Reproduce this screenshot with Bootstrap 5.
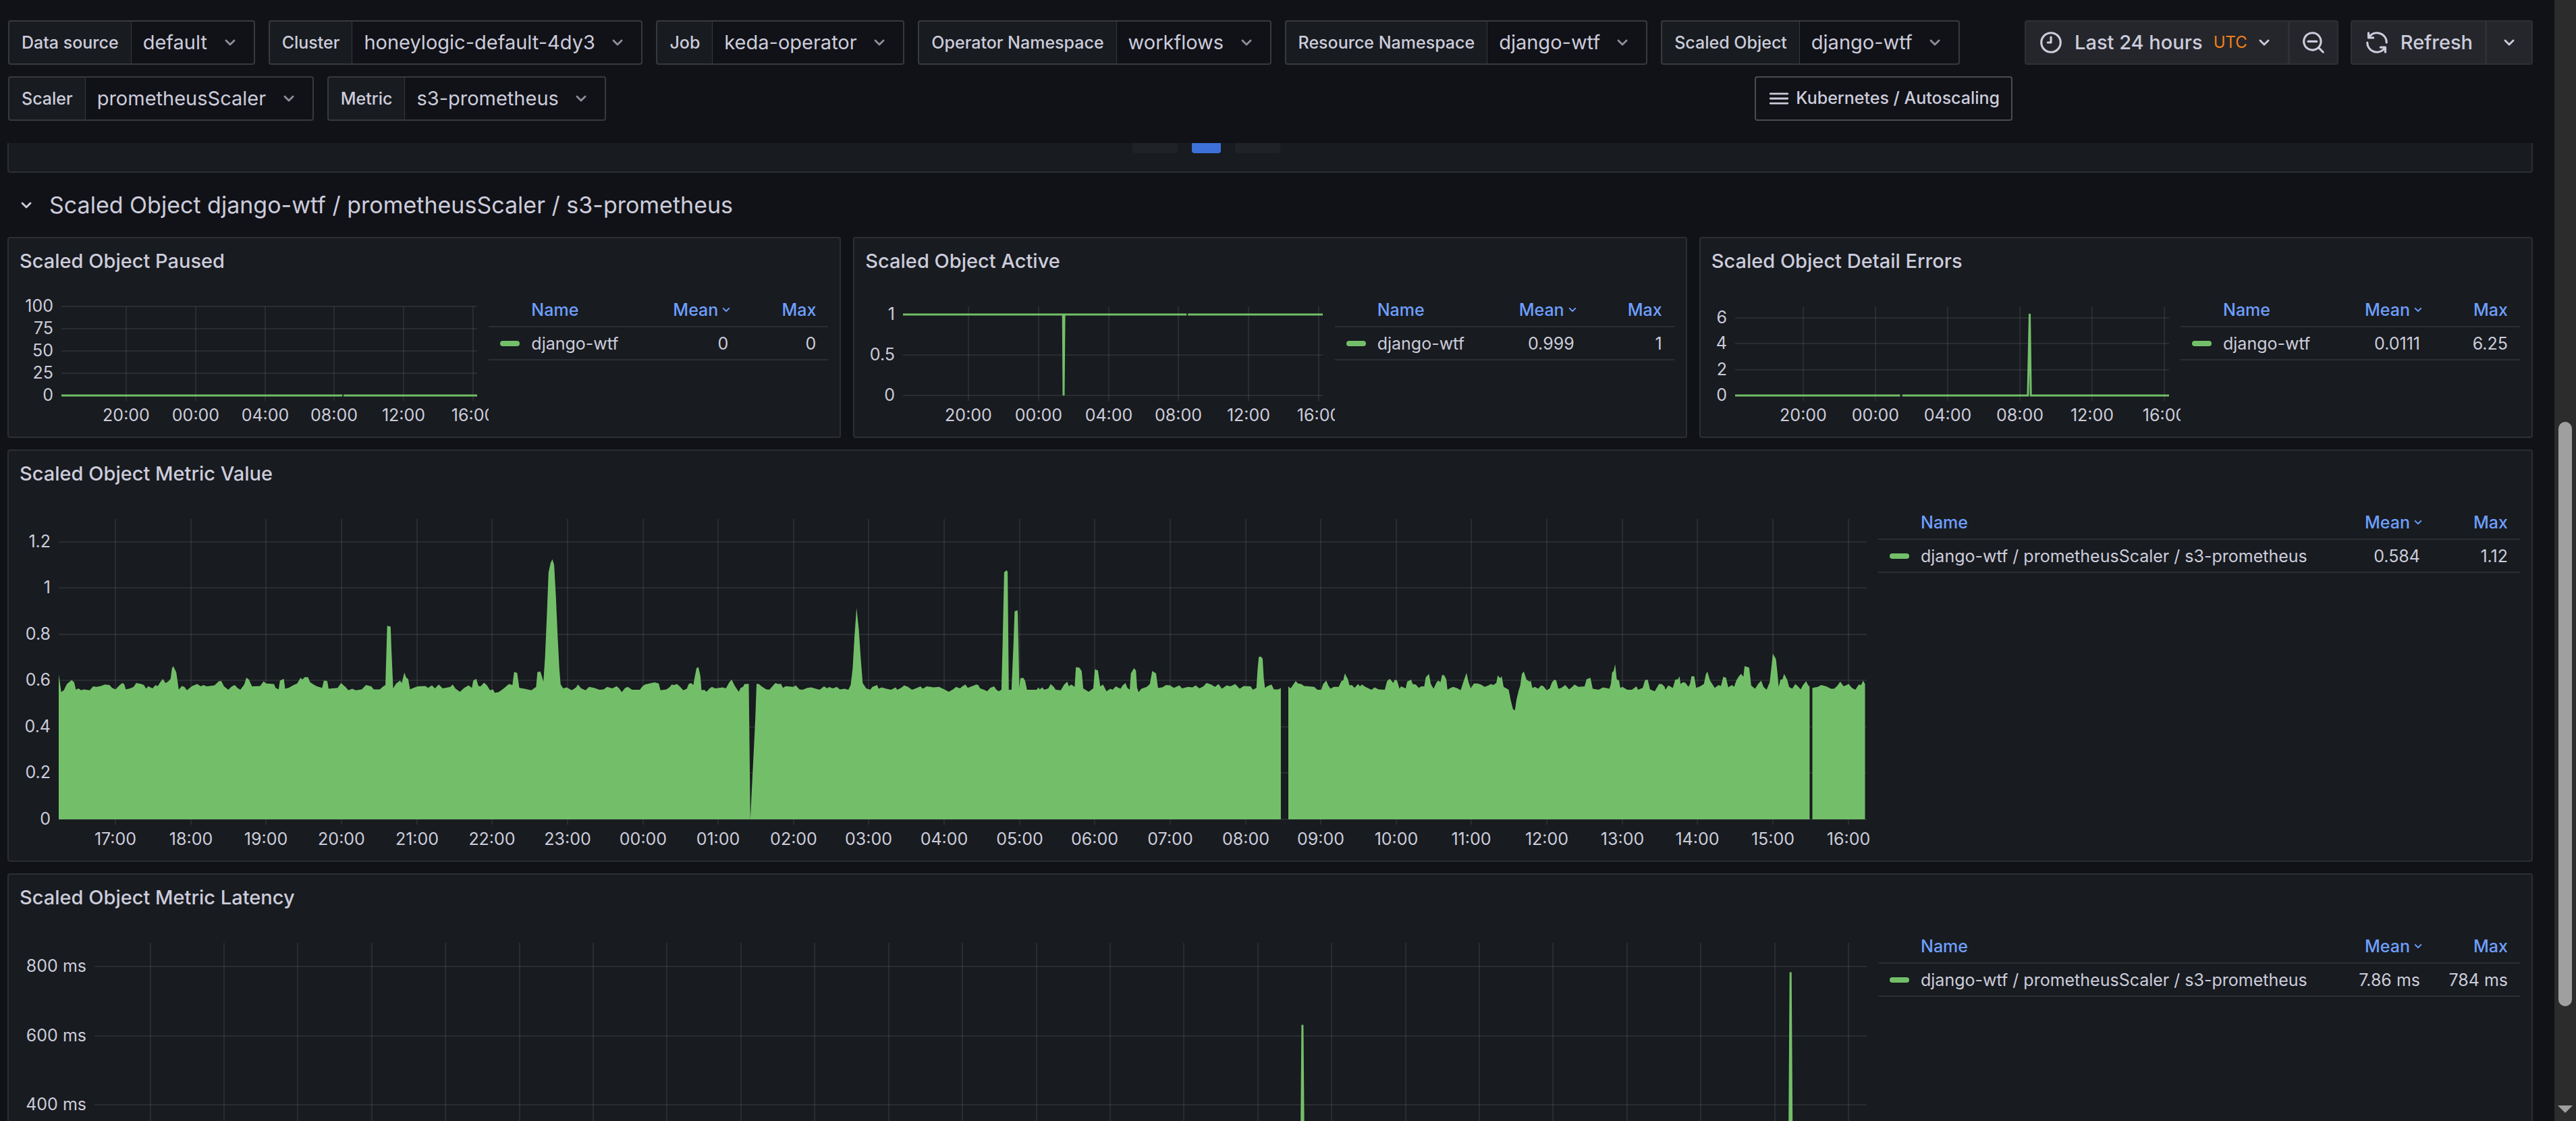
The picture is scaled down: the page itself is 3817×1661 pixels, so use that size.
<!DOCTYPE html>
<html lang="en" data-bs-theme="dark">
<head>
<meta charset="utf-8">
<meta name="viewport" content="width=device-width, initial-scale=1">
<title>Kubernetes / Autoscaling / KEDA</title>
<link rel="stylesheet" href="https://cdn.jsdelivr.net/npm/bootstrap@5.3.0/dist/css/bootstrap.min.css">
<style>
:root{--canvas:#111217;--panel:#181b1f;--line:#2d2e34;--field-line:#38393f;--ink:#ccccdc;--link:#6e9fff;--green:#73bf69;}
body{background:var(--canvas);color:var(--ink);font-family:Inter,"Liberation Sans",sans-serif;font-size:25px;line-height:32px;}
svg.ic{fill:currentColor;flex:none;display:block;}
.ic-lg{width:38px;height:38px}
.ic-md{width:34px;height:34px}
.ic-sm{width:24px;height:24px}

/* top controls */
.dash-top{padding:30px 0 33px 1px;column-gap:18px;}
.dash-vars{gap:17px 20px;}
.var-box{width:auto;height:66px;}
.var-box .input-group-text{background:var(--panel);border:2px solid var(--field-line);border-right-width:1px;border-radius:4px;color:var(--ink);font-size:25px;font-weight:500;line-height:32px;padding:0 18px;}
.var-box .form-select{flex:0 0 auto;width:auto;background-color:var(--canvas);border:2px solid var(--field-line);border-left-width:1px;border-radius:4px;color:var(--ink);font-size:29px;line-height:38px;padding:0 68px 0 17px;
 background-image:url("data:image/svg+xml,%3Csvg xmlns='http://www.w3.org/2000/svg' viewBox='0 0 24 24' fill='%238e8e9a'%3E%3Cpath d='M17,9.17a1,1,0,0,0-1.41,0L12,12.71,8.46,9.17a1,1,0,0,0-1.41,0,1,1,0,0,0,0,1.42l4.24,4.24a1,1,0,0,0,1.42,0L17,10.59A1,1,0,0,0,17,9.17Z'/%3E%3C/svg%3E");
 background-size:34px 34px;background-position:right 18px center;}
.dash-link{height:66px;border:2px solid #4a4b51;border-radius:4px;color:var(--ink);font-size:25px;font-weight:500;padding:0 17px;gap:8px;}
.tool-btn{height:66px;background:#24262b;border:2px solid #2f3036;border-radius:4px;color:var(--ink);font-size:29px;font-weight:500;line-height:38px;padding:0 18px;}
.tool-btn .tz{color:#f08019;font-size:24px;font-weight:400;}
.tool-btn.tool-slim{padding:0 16px;}

/* dashboard body */
.dash-main{padding:0 32px 0 11px;}
.clip-view{height:44px;overflow:hidden;}
.panel-box{background:var(--panel);border:2px solid var(--line);border-radius:4px;}
.prev-panel{height:120px;gap:21px;padding:0 190px 27px 0;}
.page-btn{border:0;height:49px;width:67px;background:#1f2226;border-radius:4px;padding:0;}
.page-btn.current{width:43px;background:#3d71d9;}
.row-head{height:95px;padding-left:11px;font-size:34px;line-height:44px;color:var(--ink);font-weight:400;}
.row-head button{background:none;border:0;color:inherit;padding:0;gap:17px;}
.panels{gap:17px;}
.panel-row{gap:18px;}
.panel-row .panel-box{flex:1 1 0;}
.panel-sm{height:298px;}
.panel-lg{height:611px;}
.panel-title{font-size:29px;font-weight:500;line-height:38px;padding:15px 16px 13px;margin:0;color:var(--ink);}
.panel-body{padding:0 17px 16px 16px;min-height:0;}
.chart{min-width:0;overflow:hidden;}
.chart svg{display:block;width:100%;height:100%;}
.chart text{fill:var(--ink);font-size:25px;}
.chart .grid{stroke:rgba(240,250,255,.08);stroke-width:2;shape-rendering:crispEdges;}
.chart .wave{fill:none;stroke:var(--green);stroke-width:3;}
.chart .wave-fill{fill:var(--green);}
.legend{padding-top:16px;}
.legend-sm{flex:0 0 503px;}
.legend-lg{flex:0 0 951px;}
.legend table{width:100%;border-collapse:collapse;font-size:25px;line-height:32px;}
.legend th{color:var(--link);font-weight:500;}
.legend th,.legend td{height:49px;padding:0 18px 0 0;border-bottom:2px solid var(--line);text-align:right;white-space:nowrap;}
.legend th:first-child,.legend td:first-child{text-align:left;padding-left:17px;}
.legend th:first-child{padding-left:63px;}
.legend th:last-child,.legend td:last-child{width:130px;}
.legend .sorted{padding-right:9px;}
.swatch{width:29px;height:8px;border-radius:4px;background:var(--green);margin-right:17px;}

/* scroll rail */
.rail{flex:0 0 32px;background:#2c2c2c;}
.rail-gap{flex:625 0 0}
.rail-thumb{flex:866 0 0;width:20px;border-radius:10px;background:#9f9f9f;}
.rail-tail{flex:147 0 0}
.rail-arrow{width:22px;height:23px;}
</style>
<script src="https://cdn.jsdelivr.net/npm/bootstrap@5.3.0/dist/js/bootstrap.bundle.min.js"></script>
</head>
<body class="d-flex vh-100 overflow-hidden">
<svg class="d-none" aria-hidden="true">
  <symbol id="i-down" viewBox="0 0 24 24"><path d="M17,9.17a1,1,0,0,0-1.41,0L12,12.71,8.46,9.17a1,1,0,0,0-1.41,0,1,1,0,0,0,0,1.42l4.24,4.24a1,1,0,0,0,1.42,0L17,10.59A1,1,0,0,0,17,9.17Z"/></symbol>
  <symbol id="i-clock" viewBox="0 0 24 24"><path d="M12,2A10,10,0,1,0,22,12,10,10,0,0,0,12,2Zm0,18a8,8,0,1,1,8-8A8,8,0,0,1,12,20ZM12,6a1,1,0,0,0-1,1v4H9a1,1,0,0,0,0,2h3a1,1,0,0,0,1-1V7A1,1,0,0,0,12,6Z"/></symbol>
  <symbol id="i-zoomout" viewBox="0 0 24 24"><path d="M21.71,20.29,18,16.61A9,9,0,1,0,16.61,18l3.68,3.68a1,1,0,0,0,1.42,0A1,1,0,0,0,21.71,20.29ZM11,18a7,7,0,1,1,7-7A7,7,0,0,1,11,18Zm4-8H7a1,1,0,0,0,0,2h8a1,1,0,0,0,0-2Z"/></symbol>
  <symbol id="i-sync" viewBox="0 0 24 24"><path d="M19.91,15.51H15.38a1,1,0,0,0,0,2h2.4A8,8,0,0,1,4,12a1,1,0,1,0-2,0,10,10,0,0,0,16.88,7.23V21a1,1,0,0,0,2,0V16.5A1,1,0,0,0,19.91,15.51ZM12,2A10,10,0,0,0,5.12,4.77V3a1,1,0,0,0-2,0V7.5a1,1,0,0,0,1,1h4.5a1,1,0,0,0,0-2H6.22A8,8,0,0,1,20,12a1,1,0,0,0,2,0A10,10,0,0,0,12,2Z"/></symbol>
  <symbol id="i-bars" viewBox="0 0 24 24"><path d="M3,8H21a1,1,0,0,0,0-2H3A1,1,0,0,0,3,8Zm18,8H3a1,1,0,0,0,0,2H21a1,1,0,0,0,0-2Zm0-5H3a1,1,0,0,0,0,2H21a1,1,0,0,0,0-2Z"/></symbol>
</svg>

<main class="dash-main flex-grow-1 overflow-hidden">
  <header class="dash-top d-flex align-items-start">
    <div class="dash-vars d-flex flex-wrap flex-grow-1">
      <div class="input-group flex-nowrap var-box"><label class="input-group-text" for="v-ds">Data source</label><select class="form-select" id="v-ds"><option>default</option></select></div>
      <div class="input-group flex-nowrap var-box"><label class="input-group-text" for="v-cl">Cluster</label><select class="form-select" id="v-cl"><option>honeylogic-default-4dy3</option></select></div>
      <div class="input-group flex-nowrap var-box"><label class="input-group-text" for="v-job">Job</label><select class="form-select" id="v-job"><option>keda-operator</option></select></div>
      <div class="input-group flex-nowrap var-box"><label class="input-group-text" for="v-on">Operator Namespace</label><select class="form-select" id="v-on"><option>workflows</option></select></div>
      <div class="input-group flex-nowrap var-box"><label class="input-group-text" for="v-rn">Resource Namespace</label><select class="form-select" id="v-rn"><option>django-wtf</option></select></div>
      <div class="input-group flex-nowrap var-box"><label class="input-group-text" for="v-so">Scaled Object</label><select class="form-select" id="v-so"><option>django-wtf</option></select></div>
      <div class="input-group flex-nowrap var-box"><label class="input-group-text" for="v-sc">Scaler</label><select class="form-select" id="v-sc"><option>prometheusScaler</option></select></div>
      <div class="input-group flex-nowrap var-box"><label class="input-group-text" for="v-me">Metric</label><select class="form-select" id="v-me"><option>s3-prometheus</option></select></div>
      <button type="button" class="btn dash-link d-flex align-items-center ms-auto"><svg class="ic ic-md"><use href="#i-bars"/></svg>Kubernetes / Autoscaling</button>
    </div>
    <div class="btn-group flex-shrink-0">
      <button type="button" class="btn tool-btn d-flex align-items-center"><svg class="ic ic-lg me-3"><use href="#i-clock"/></svg>Last 24 hours<span class="tz ms-3 me-2">UTC</span><svg class="ic ic-md"><use href="#i-down"/></svg></button>
      <button type="button" class="btn tool-btn tool-slim d-flex align-items-center" aria-label="Zoom out time range"><svg class="ic ic-lg"><use href="#i-zoomout"/></svg></button>
    </div>
    <div class="btn-group flex-shrink-0">
      <button type="button" class="btn tool-btn d-flex align-items-center"><svg class="ic ic-lg me-3"><use href="#i-sync"/></svg>Refresh</button>
      <button type="button" class="btn tool-btn tool-slim d-flex align-items-center" aria-label="Auto refresh interval"><svg class="ic ic-md"><use href="#i-down"/></svg></button>
    </div>
  </header>

  <div class="clip-view d-flex align-items-end">
    <nav class="panel-box prev-panel w-100 d-flex justify-content-center align-items-end" aria-label="Table pages">
      <button type="button" class="page-btn" aria-label="Previous page"></button>
      <button type="button" class="page-btn current" aria-label="Current page"></button>
      <button type="button" class="page-btn" aria-label="Next page"></button>
    </nav>
  </div>

  <h2 class="row-head d-flex align-items-center m-0"><button type="button" class="d-flex align-items-center"><svg class="ic ic-md"><use href="#i-down"/></svg>Scaled Object django-wtf / prometheusScaler / s3-prometheus</button></h2>

  <div class="panels d-flex flex-column">
    <div class="panel-row d-flex">
      <section class="panel-box panel-sm d-flex flex-column">
        <h3 class="panel-title">Scaled Object Paused</h3>
        <div class="panel-body d-flex flex-grow-1">
          <div class="chart flex-grow-1" data-chart="paused"></div>
          <div class="legend legend-sm"><table>
            <thead><tr><th>Name</th><th class="sorted"><span class="d-inline-flex align-items-center">Mean<svg class="ic ic-sm"><use href="#i-down"/></svg></span></th><th>Max</th></tr></thead>
            <tbody><tr><td><span class="d-flex align-items-center"><span class="swatch"></span>django-wtf</span></td><td>0</td><td>0</td></tr></tbody></table></div>
        </div>
      </section>
      <section class="panel-box panel-sm d-flex flex-column">
        <h3 class="panel-title">Scaled Object Active</h3>
        <div class="panel-body d-flex flex-grow-1">
          <div class="chart flex-grow-1" data-chart="active"></div>
          <div class="legend legend-sm"><table>
            <thead><tr><th>Name</th><th class="sorted"><span class="d-inline-flex align-items-center">Mean<svg class="ic ic-sm"><use href="#i-down"/></svg></span></th><th>Max</th></tr></thead>
            <tbody><tr><td><span class="d-flex align-items-center"><span class="swatch"></span>django-wtf</span></td><td>0.999</td><td>1</td></tr></tbody></table></div>
        </div>
      </section>
      <section class="panel-box panel-sm d-flex flex-column">
        <h3 class="panel-title">Scaled Object Detail Errors</h3>
        <div class="panel-body d-flex flex-grow-1">
          <div class="chart flex-grow-1" data-chart="errors"></div>
          <div class="legend legend-sm"><table>
            <thead><tr><th>Name</th><th class="sorted"><span class="d-inline-flex align-items-center">Mean<svg class="ic ic-sm"><use href="#i-down"/></svg></span></th><th>Max</th></tr></thead>
            <tbody><tr><td><span class="d-flex align-items-center"><span class="swatch"></span>django-wtf</span></td><td>0.0111</td><td>6.25</td></tr></tbody></table></div>
        </div>
      </section>
    </div>

    <section class="panel-box panel-lg d-flex flex-column">
      <h3 class="panel-title">Scaled Object Metric Value</h3>
      <div class="panel-body d-flex flex-grow-1">
        <div class="chart flex-grow-1" data-chart="value"></div>
        <div class="legend legend-lg"><table>
          <thead><tr><th>Name</th><th class="sorted"><span class="d-inline-flex align-items-center">Mean<svg class="ic ic-sm"><use href="#i-down"/></svg></span></th><th>Max</th></tr></thead>
          <tbody><tr><td><span class="d-flex align-items-center"><span class="swatch"></span>django-wtf / prometheusScaler / s3-prometheus</span></td><td>0.584</td><td>1.12</td></tr></tbody></table></div>
      </div>
    </section>

    <section class="panel-box panel-lg d-flex flex-column">
      <h3 class="panel-title">Scaled Object Metric Latency</h3>
      <div class="panel-body d-flex flex-grow-1">
        <div class="chart flex-grow-1" data-chart="latency"></div>
        <div class="legend legend-lg"><table>
          <thead><tr><th>Name</th><th class="sorted"><span class="d-inline-flex align-items-center">Mean<svg class="ic ic-sm"><use href="#i-down"/></svg></span></th><th>Max</th></tr></thead>
          <tbody><tr><td><span class="d-flex align-items-center"><span class="swatch"></span>django-wtf / prometheusScaler / s3-prometheus</span></td><td>7.86 ms</td><td>784 ms</td></tr></tbody></table></div>
      </div>
    </section>
  </div>
</main>

<aside class="rail d-flex flex-column align-items-center" aria-hidden="true">
  <div class="rail-gap"></div><div class="rail-thumb"></div><div class="rail-tail"></div>
  <svg class="rail-arrow" viewBox="0 0 22 23"><path d="M0 0h22L11 11z" fill="#9f9f9f"/></svg>
</aside>

<script>
// Hours are counted from midnight of the first day; the window is 24 h long.
const START = 16.246, SPAN = 24;

// Compact samples: [x, y, x, y, ...]; x ticks per hour and y ticks per unit are given by each block.
const unpack = (hour0, x0, perHour, flat) => {
  const out = [];
  for (let i = 0; i < flat.length; i += 2) out.push([hour0 + (flat[i] - x0) / perHour, (1326 - flat[i + 1]) / 961]);
  return out;
};
const evening = unpack(17, 270, 175, [138,725,144,798,150,790,157,764,168,748,174,756,178,788,184,782,190,790,196,786,210,790,218,774,226,776,236,772,245,766,256,768,262,780,270,786,280,768,286,760,290,764,294,786,304,782,312,776,318,760,330,764,336,768,341,784,346,773,356,782,363,768,368,773,374,756,380,743,386,760,392,754,398,742,401,700,404,690,411,714,414,750,417,788,424,772,430,776,436,790,448,772,460,764,468,774,474,768,482,774,500,770,510,752,516,752,522,774,532,788,540,774,547,768,553,780,560,788,569,766,574,737,580,746,587,774,606,772,614,753,620,762,638,764,642,780,649,786,652,750,661,742,664,784,672,780,684,768,692,762,700,738,704,746,709,736,717,735,722,756,730,766,738,774,750,780,754,749,762,752,765,784,786,780,794,760,804,776,811,790,820,784,828,790,842,786,852,768,864,774,870,786,884,786,892,774,897,768,901,522,909,526,911,620,915,782,922,762,931,750,935,760,941,716,945,736,950,744,954,786,962,780,972,774,990,772,996,780,1005,770,1012,782,1021,766,1030,782,1048,776,1053,766,1060,784,1070,796,1080,780,1090,770,1098,780,1101,750,1108,742,1113,772,1118,774,1126,758,1133,770,1140,790,1147,786,1151,800,1160,798,1172,782,1184,764,1192,768,1196,714,1203,718,1208,780,1220,784,1236,790,1247,776,1250,714,1257,712,1264,754,1268,650,1272,480,1276,300,1281,260,1285,246,1289,270,1293,400,1297,560,1301,700,1304,765,1310,782,1318,778,1330,790,1340,778,1344,766,1352,782,1362,790,1370,776,1382,780,1394,788,1404,786,1412,776,1424,782,1434,773,1440,782,1446,798,1454,780,1460,776,1470,788,1488,788,1494,774,1500,766,1510,762,1522,757,1532,762,1536,790,1550,786,1558,776,1562,766]);
const night = unpack(25, 114, 194.4, [0,768,8,764,16,776,24,790,33,784,38,764,44,760,50,768,53,740,58,698,63,694,68,730,71,790,78,788,84,796,92,782,98,776,106,782,116,780,126,778,134,782,143,756,149,746,156,770,167,796,172,780,178,776,182,764,193,763,194,900,197,1326,207,1000,210,900,213,763,219,764,226,774,238,786,246,788,256,770,262,760,268,764,276,763,281,780,288,773,308,776,314,770,324,786,332,788,344,780,354,778,366,784,376,788,387,774,396,782,400,776,410,782,420,776,428,786,440,784,450,788,456,768,461,700,466,560,471,448,477,540,482,660,487,760,496,782,506,788,512,776,524,768,528,784,536,778,548,784,560,788,572,778,576,788,586,780,594,770,604,776,614,788,624,782,636,774,642,784,652,774,662,776,670,778,684,776,692,782,702,790,709,796,720,786,728,776,738,782,744,774,752,766,758,780,768,774,780,766,785,768,790,782,800,788,808,794,816,780,826,774,832,788,838,794,845,788,848,600,852,300,858,292,861,298,864,788,871,788,876,600,879,462,887,458,889,600,891,780,894,740,901,738,906,750,911,788,922,788,936,788,940,778,944,786,950,778,956,788,966,782,972,764,980,776,985,788,998,790,1007,766,1015,754,1019,774,1025,766,1034,776,1037,694,1046,696,1052,710,1056,782,1070,796,1082,782,1086,702,1094,708,1100,774,1107,766,1116,794,1126,784,1132,788,1140,774,1152,784,1158,770,1165,760,1170,780,1176,788,1179,720,1187,698,1192,708,1195,780,1199,798,1206,784,1220,776,1228,764,1234,710,1244,720,1249,780,1260,778,1270,768,1280,770,1290,780,1304,770,1311,782,1326,776,1338,778,1346,770,1356,782,1366,774,1374,760,1386,766,1396,776,1405,764,1414,784,1426,770,1436,774,1448,764,1460,784,1470,772,1488,774,1494,788,1503,780,1506,700,1509,652,1514,650,1519,658,1522,740,1525,780,1532,772,1542,766,1548,786,1560,786,1566,780]);
const day = unpack(33, 135, 194.5, [51,774,57,782,64,766,70,751,76,762,84,764,92,772,104,774,118,776,126,788,136,788,141,764,149,750,154,770,160,784,168,776,181,776,188,752,193,748,197,720,205,744,209,770,215,768,222,780,231,764,236,774,241,766,250,776,260,784,266,788,274,778,284,786,300,788,306,752,313,742,322,760,326,746,332,750,338,784,342,774,354,782,358,754,368,746,372,764,380,766,388,780,394,774,402,774,406,736,414,722,419,764,426,784,434,756,438,750,444,756,448,726,454,728,459,746,462,788,470,780,477,776,488,782,496,790,502,760,511,718,516,754,522,782,530,762,540,762,548,766,558,776,568,770,574,764,580,768,588,760,592,728,598,740,602,732,607,776,614,782,620,788,625,830,631,868,636,874,640,830,646,790,650,770,654,722,659,712,666,746,674,754,677,750,681,780,688,776,696,784,704,770,710,774,718,790,726,782,732,756,738,746,743,750,748,784,756,780,766,768,776,786,784,776,790,766,800,776,816,774,821,744,831,738,837,784,852,788,864,778,880,784,884,764,887,716,891,710,895,682,899,744,905,750,908,780,914,776,926,788,938,788,950,774,954,788,966,780,972,748,979,746,985,786,997,794,1008,764,1015,764,1022,774,1025,788,1032,770,1044,780,1050,746,1057,744,1061,732,1064,764,1070,756,1076,758,1084,776,1088,764,1092,732,1099,732,1104,780,1114,774,1124,764,1129,724,1133,712,1140,750,1152,780,1162,768,1168,772,1174,734,1181,738,1187,778,1196,768,1202,776,1208,748,1215,730,1220,722,1226,734,1229,690,1241,696,1246,770,1256,784,1264,764,1272,750,1278,776,1286,788,1294,756,1298,700,1302,638,1310,660,1314,720,1317,776,1322,746,1327,744,1331,722,1339,746,1344,776,1352,784,1360,764,1367,774,1374,786,1380,768,1388,752,1392,766,1397,776]);
const afternoon = unpack(33, 135, 194.5, [1404,780,1418,776,1427,768,1440,774,1452,784,1460,784,1468,772,1476,754,1485,774,1498,764,1506,780,1515,788,1524,766,1530,768,1535,750,1540,764]);

const END = START + SPAN;
const charts = {
  paused:  {axis: 62, top: 100, ticks: [0, 25, 50, 75, 100], every: 4, series: [[[START, 0], [32.46, 0]], [[32.54, 0], [END, 0]]]},
  active:  {axis: 56, top: 1.1, ticks: [0, 0.5, 1], every: 4, series: [[[START, 1], [25.4, 1], [25.43, 0], [25.47, 1], [32.46, 1]], [[32.54, 1], [END, 1]]]},
  errors:  {axis: 35, top: 6.9, ticks: [0, 2, 4, 6], every: 4, series: [[[START, 0], [25.37, 0]], [[25.5, 0], [32.44, 0], [32.54, 6.33], [32.6, 0], [END, 0]]]},
  value:   {axis: 58, top: 1.298, ticks: [0, 0.2, 0.4, 0.6, 0.8, 1, 1.2], every: 1, area: true, series: [evening.concat(night), day, afternoon]},
  latency: {axis: 111, top: 869, ticks: [0, 200, 400, 600, 800], unit: ' ms', every: 1, series: [[[START, 6], [32.58, 6], [32.605, 632], [32.63, 6], [39.19, 6], [39.215, 784], [39.24, 6], [END, 6]]]}
};

function draw(box) {
  const c = charts[box.dataset.chart], w = box.clientWidth, h = box.clientHeight;
  const left = c.axis, right = w - 17, up = 35, base = h - 45;
  const X = t => left + (t - START) / SPAN * (right - left);
  const Y = v => base - v / c.top * (base - up);
  let s = '';
  for (const v of c.ticks) {
    const y = Math.round(Y(v));
    s += `<line class="grid" x1="${left}" x2="${right}" y1="${y}" y2="${y}"/><text x="${left - 12}" y="${y + 8}" text-anchor="end">${v}${c.unit || ''}</text>`;
  }
  for (let t = Math.ceil(START / c.every) * c.every; t <= END; t += c.every) {
    const x = Math.round(X(t)), name = String(t % 24).padStart(2, '0') + ':00';
    s += `<line class="grid" x1="${x}" x2="${x}" y1="${up}" y2="${base + 8}"/><text x="${x}" y="${base + 38}" text-anchor="middle">${name}</text>`;
  }
  for (const run of c.series) {
    const d = run.map(p => X(p[0]).toFixed(1) + ',' + Y(p[1]).toFixed(1)).join(' ');
    s += c.area
      ? `<polygon class="wave-fill" points="${X(run[0][0]).toFixed(1)},${base} ${d} ${X(run[run.length - 1][0]).toFixed(1)},${base}"/>`
      : `<polyline class="wave" points="${d}"/>`;
  }
  box.innerHTML = `<svg role="img" aria-label="${box.dataset.chart} over the last 24 hours">${s}</svg>`;
}
const drawAll = () => document.querySelectorAll('.chart').forEach(draw);
drawAll();
addEventListener('resize', drawAll);
</script>
</body>
</html>
